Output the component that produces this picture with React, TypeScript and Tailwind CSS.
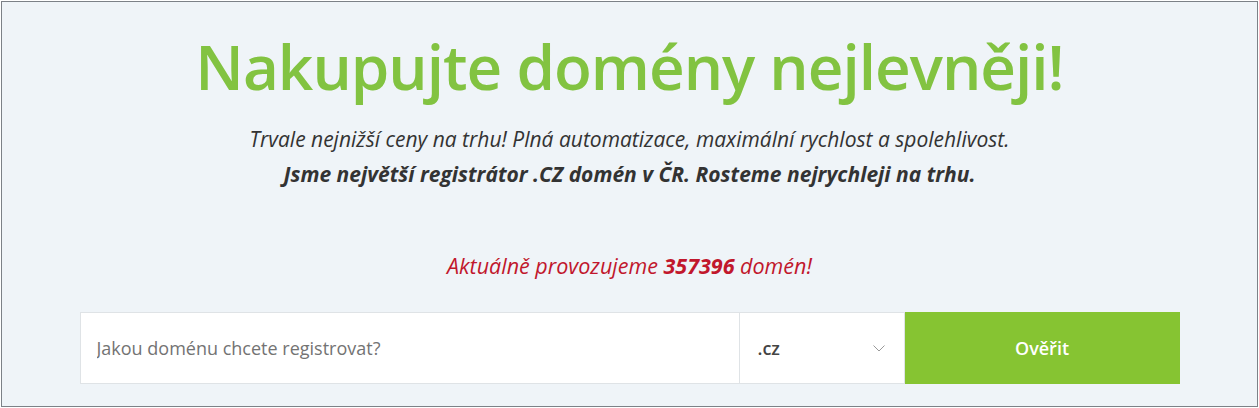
import { useState } from 'react';

export default function App() {
  const [domain, setDomain] = useState('');
  const [tld, setTld] = useState('.cz');

  return (
    <div className="h-[408px] w-[1259px] bg-white p-px font-['Open_Sans',sans-serif]">
      <section className="flex h-full flex-col items-center border border-[#7c8187] bg-[#eff4f8]">
        <h1 className="mt-[20px] text-[62px] leading-[88px] font-semibold tracking-[-1px] text-[#82c341]">
          Nakupujte domény nejlevněji!
        </h1>
        <p className="mt-[12px] text-center text-[21px] leading-[35px] text-[#333] italic">
          Trvale nejnižší ceny na trhu! Plná automatizace, maximální rychlost a spolehlivost.
          <br />
          <strong className="font-bold">Jsme největší registrátor .CZ domén v ČR. Rosteme nejrychleji na trhu.</strong>
        </p>
        <p className="mt-[59px] text-[21.5px] leading-[30px] text-[#c1172c] italic">
          Aktuálně provozujeme <strong className="font-bold">357396</strong> domén!
        </p>
        <form
          className="mt-[31px] flex h-[72px] w-[1100px]"
          onSubmit={(event) => event.preventDefault()}
        >
          <input
            className="w-[660px] border border-[#dfe3e6] bg-white px-4 text-[18px] text-[#555] outline-none placeholder:text-[#737373]"
            value={domain}
            onChange={(event) => setDomain(event.target.value)}
            placeholder="Jakou doménu chcete registrovat?"
          />
          <div className="relative w-[165px] border-y border-r border-[#dfe3e6] bg-white">
            <select
              className="h-full w-full appearance-none bg-transparent pl-[18px] text-[18px] font-semibold text-[#444] outline-none"
              value={tld}
              onChange={(event) => setTld(event.target.value)}
            >
              <option value=".cz">.cz</option>
              <option value=".sk">.sk</option>
              <option value=".eu">.eu</option>
              <option value=".com">.com</option>
            </select>
            <svg
              className="pointer-events-none absolute top-[32px] right-[19px] h-[7px] w-[12px] text-[#999]"
              viewBox="0 0 12 7"
              fill="none"
              stroke="currentColor"
              strokeWidth="1"
            >
              <path d="M0.5 0.5l5.5 5.5 5.5-5.5" />
            </svg>
          </div>
          <button className="w-[275px] bg-[#86c432] text-[18px] font-semibold text-white">Ověřit</button>
        </form>
      </section>
    </div>
  );
}
